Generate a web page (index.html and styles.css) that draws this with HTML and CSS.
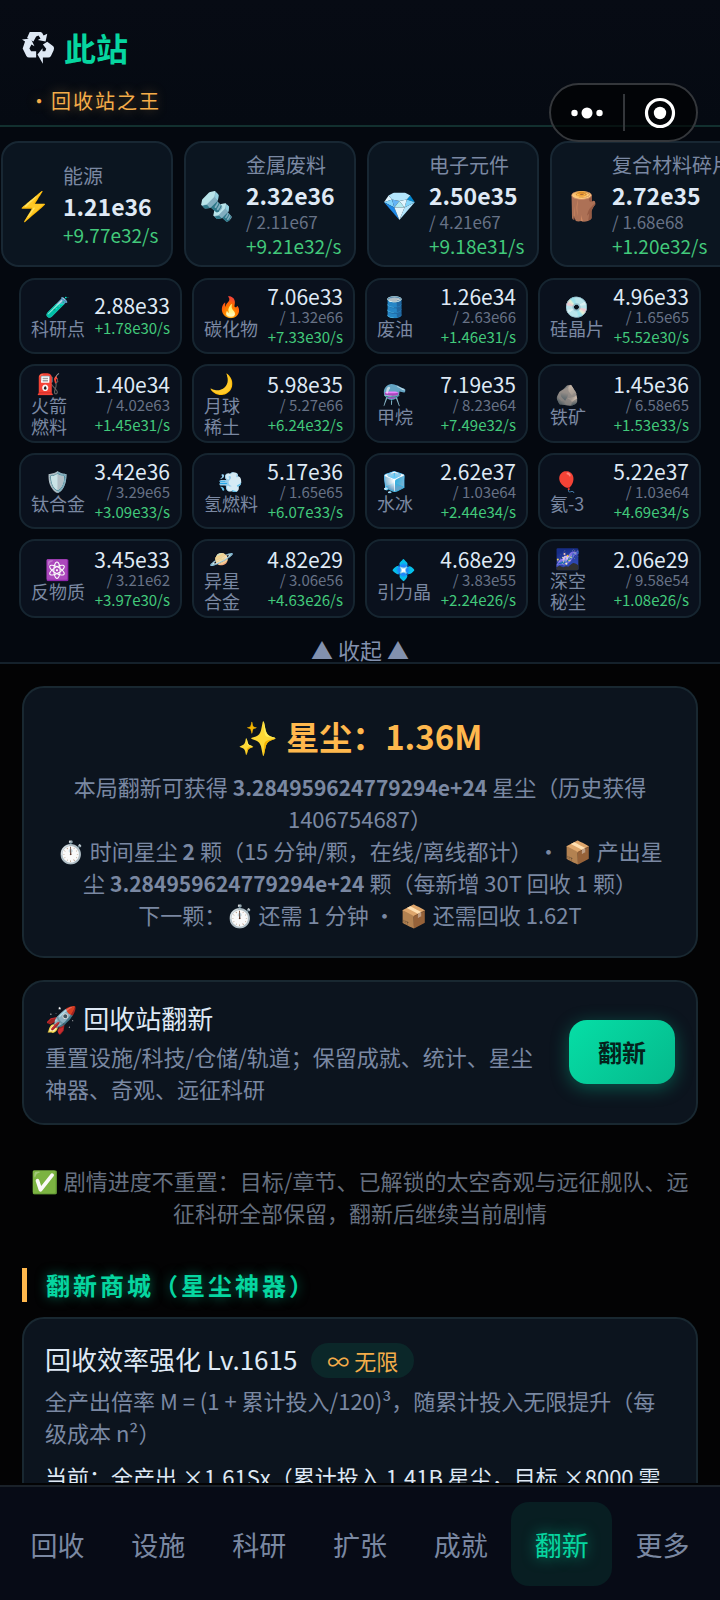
FILE: index.html
```html
<!DOCTYPE html>
<html lang="zh-CN">
<head>
    <meta charset="UTF-8">
    <meta name="viewport" content="width=device-width, initial-scale=1.0">
    <title>此站</title>
    <link rel="stylesheet" href="styles.css">
</head>
<body>
<div class="app">

    <header class="header">
        <h1 class="brand">
            <svg class="brand-icon" viewBox="18 16 98 98" fill="#dfe9f5" aria-hidden="true">
                <path d="M41 19H73Q78 19 82 29L93 24L88 47L65 43L73 38L67 29L60 32L52 47L33 37Z"/>
                <path d="M18 41L44 38L55 61L46 56L40 68L45 76H60V95H39Q34 95 31 90L20 68L27 47Z"/>
                <path d="M93 48L111 61Q115 66 112 73L104 90Q101 95 96 95H80V113L64 86L79 67V76H87L90 69L80 56Z"/>
            </svg>
            <span>此站</span>
        </h1>
        <div class="rank">・回收站之王</div>
        <div class="capsule">
            <button class="capsule-btn" aria-label="更多操作">
                <svg width="32" height="12" viewBox="0 0 32 12" fill="#fff"><circle cx="3.5" cy="6" r="3.2"/><circle cx="16" cy="6" r="5.5"/><circle cx="28.5" cy="6" r="3.2"/></svg>
            </button>
            <button class="capsule-btn" aria-label="关闭">
                <svg width="32" height="32" viewBox="0 0 32 32"><circle cx="16" cy="16" r="13.5" fill="none" stroke="#fff" stroke-width="3.2"/><circle cx="16" cy="16" r="6.2" fill="#fff"/></svg>
            </button>
        </div>
    </header>

    <section class="resources">
        <div class="chips">
            <div class="chip"><span class="chip-icon">⚡</span><div class="chip-info"><span class="chip-name">能源</span><b class="chip-value">1.21e36</b><span class="chip-rate">+9.77e32/s</span></div></div>
            <div class="chip"><span class="chip-icon">🔩</span><div class="chip-info"><span class="chip-name">金属废料</span><b class="chip-value">2.32e36</b><span class="chip-cap">/ 2.11e67</span><span class="chip-rate">+9.21e32/s</span></div></div>
            <div class="chip"><span class="chip-icon">💎</span><div class="chip-info"><span class="chip-name">电子元件</span><b class="chip-value">2.50e35</b><span class="chip-cap">/ 4.21e67</span><span class="chip-rate">+9.18e31/s</span></div></div>
            <div class="chip"><span class="chip-icon">🪵</span><div class="chip-info"><span class="chip-name">复合材料碎片</span><b class="chip-value">2.72e35</b><span class="chip-cap">/ 1.68e68</span><span class="chip-rate">+1.20e32/s</span></div></div>
        </div>

        <div class="grid">
            <div class="cell"><div class="cell-label"><span class="cell-icon">🧪</span><span>科研点</span></div><div class="cell-data"><span class="value">2.88e33</span><span class="rate">+1.78e30/s</span></div></div>
            <div class="cell"><div class="cell-label"><span class="cell-icon">🔥</span><span>碳化物</span></div><div class="cell-data"><span class="value">7.06e33</span><span class="cap">/ 1.32e66</span><span class="rate">+7.33e30/s</span></div></div>
            <div class="cell"><div class="cell-label"><span class="cell-icon">🛢️</span><span>废油</span></div><div class="cell-data"><span class="value">1.26e34</span><span class="cap">/ 2.63e66</span><span class="rate">+1.46e31/s</span></div></div>
            <div class="cell"><div class="cell-label"><span class="cell-icon">💿</span><span>硅晶片</span></div><div class="cell-data"><span class="value">4.96e33</span><span class="cap">/ 1.65e65</span><span class="rate">+5.52e30/s</span></div></div>

            <div class="cell"><div class="cell-label"><span class="cell-icon">⛽</span><span>火箭<br>燃料</span></div><div class="cell-data"><span class="value">1.40e34</span><span class="cap">/ 4.02e63</span><span class="rate">+1.45e31/s</span></div></div>
            <div class="cell"><div class="cell-label"><span class="cell-icon">🌙</span><span>月球<br>稀土</span></div><div class="cell-data"><span class="value">5.98e35</span><span class="cap">/ 5.27e66</span><span class="rate">+6.24e32/s</span></div></div>
            <div class="cell"><div class="cell-label"><span class="cell-icon">⚗️</span><span>甲烷</span></div><div class="cell-data"><span class="value">7.19e35</span><span class="cap">/ 8.23e64</span><span class="rate">+7.49e32/s</span></div></div>
            <div class="cell"><div class="cell-label"><span class="cell-icon">🪨</span><span>铁矿</span></div><div class="cell-data"><span class="value">1.45e36</span><span class="cap">/ 6.58e65</span><span class="rate">+1.53e33/s</span></div></div>

            <div class="cell"><div class="cell-label"><span class="cell-icon">🛡️</span><span>钛合金</span></div><div class="cell-data"><span class="value">3.42e36</span><span class="cap">/ 3.29e65</span><span class="rate">+3.09e33/s</span></div></div>
            <div class="cell"><div class="cell-label"><span class="cell-icon">💨</span><span>氢燃料</span></div><div class="cell-data"><span class="value">5.17e36</span><span class="cap">/ 1.65e65</span><span class="rate">+6.07e33/s</span></div></div>
            <div class="cell"><div class="cell-label"><span class="cell-icon">🧊</span><span>水冰</span></div><div class="cell-data"><span class="value">2.62e37</span><span class="cap">/ 1.03e64</span><span class="rate">+2.44e34/s</span></div></div>
            <div class="cell"><div class="cell-label"><span class="cell-icon">🎈</span><span>氦-3</span></div><div class="cell-data"><span class="value">5.22e37</span><span class="cap">/ 1.03e64</span><span class="rate">+4.69e34/s</span></div></div>

            <div class="cell"><div class="cell-label"><span class="cell-icon">⚛️</span><span>反物质</span></div><div class="cell-data"><span class="value">3.45e33</span><span class="cap">/ 3.21e62</span><span class="rate">+3.97e30/s</span></div></div>
            <div class="cell"><div class="cell-label"><span class="cell-icon">🪐</span><span>异星<br>合金</span></div><div class="cell-data"><span class="value">4.82e29</span><span class="cap">/ 3.06e56</span><span class="rate">+4.63e26/s</span></div></div>
            <div class="cell"><div class="cell-label"><span class="cell-icon">💠</span><span>引力晶</span></div><div class="cell-data"><span class="value">4.68e29</span><span class="cap">/ 3.83e55</span><span class="rate">+2.24e26/s</span></div></div>
            <div class="cell"><div class="cell-label"><span class="cell-icon">🌌</span><span>深空<br>秘尘</span></div><div class="cell-data"><span class="value">2.06e29</span><span class="cap">/ 9.58e54</span><span class="rate">+1.08e26/s</span></div></div>
        </div>

        <button class="toggle">▲ 收起 ▲</button>
    </section>

    <main class="content">
        <section class="card stardust">
            <h2 class="stardust-title">✨ 星尘：1.36M</h2>
            <p>本局翻新可获得 <b>3.284959624779294e+24</b> 星尘（历史获得 1406754687）</p>
            <p>⏱️ 时间星尘 <b>2</b> 颗（15 分钟/颗，在线/离线都计） ・ 📦 产出星尘 <b>3.284959624779294e+24</b> 颗（每新增 30T 回收 1 颗）</p>
            <p>下一颗：⏱️ 还需 1 分钟 ・ 📦 还需回收 1.62T</p>
        </section>

        <section class="card renew">
            <div class="renew-info">
                <h3 class="item-title">🚀 回收站翻新</h3>
                <p>重置设施/科技/仓储/轨道；保留成就、统计、星尘神器、奇观、远征科研</p>
            </div>
            <button class="renew-btn">翻新</button>
        </section>

        <p class="note">✅ 剧情进度不重置：目标/章节、已解锁的太空奇观与远征舰队、远征科研全部保留，翻新后继续当前剧情</p>

        <h2 class="section-title">翻新商城（星尘神器）</h2>

        <section class="card shop-item">
            <h3 class="item-title">回收效率强化 Lv.1615 <span class="badge">∞ 无限</span></h3>
            <p>全产出倍率 M = (1 + 累计投入/120)³，随累计投入无限提升（每级成本 n²）</p>
            <p class="current">当前：全产出 ×1.61Sx（累计投入 1.41B 星尘，目标 ×8000 需</p>
        </section>
    </main>

    <nav class="tabbar">
        <button class="tab">回收</button>
        <button class="tab">设施</button>
        <button class="tab">科研</button>
        <button class="tab">扩张</button>
        <button class="tab">成就</button>
        <button class="tab active">翻新</button>
        <button class="tab">更多</button>
    </nav>

</div>
</body>
</html>
```
FILE: styles.css
```css
* {
    box-sizing: border-box;
}

body {
    margin: 0;
    background-color: #030304;
    color: #dfe9f5;
    font-family: "Noto Sans CJK SC", "Noto Color Emoji", sans-serif;
    font-size: 22px;
    line-height: 32px;
}

h1, h2, h3, p {
    margin: 0;
}

button {
    padding: 0;
    border: none;
    background: none;
    color: inherit;
    font-family: inherit;
    cursor: pointer;
}

.app {
    display: flex;
    flex-direction: column;
    height: 100vh;
    overflow: hidden;
}

/* header */
.header {
    position: relative;
    flex: none;
    padding: 24px 22px 9px;
    background: linear-gradient(#070b14, #050a12);
    border-bottom: 2px solid #12302f;
}

.brand {
    display: flex;
    align-items: center;
    gap: 9px;
    font-size: 32px;
    line-height: 46px;
    color: #06d6a0;
}

.brand-icon {
    width: 33px;
    height: 33px;
}

.rank {
    margin-top: 16px;
    padding-left: 7px;
    font-size: 20px;
    line-height: 30px;
    letter-spacing: 2px;
    color: #f5ad49;
    text-shadow: 0 0 12px rgba(255, 184, 77, 0.4);
}

.capsule {
    position: absolute;
    right: 22px;
    top: 83px;
    z-index: 2;
    display: flex;
    width: 149px;
    height: 59px;
    padding: 9px 0;
    border: 2px solid #34373b;
    border-radius: 30px;
    background-color: rgba(0, 0, 0, 0.6);
}

.capsule-btn {
    flex: 1;
    display: flex;
    align-items: center;
    justify-content: center;
}

.capsule-btn + .capsule-btn {
    border-left: 2px solid #34373b;
}

/* resources */
.resources {
    flex: none;
    padding-top: 14px;
    background-color: #04080f;
    border-bottom: 2px solid #15212b;
}

.chips {
    display: flex;
    gap: 11px;
    padding-left: 1px;
    overflow: hidden;
}

.chip {
    flex: none;
    display: flex;
    align-items: center;
    gap: 9px;
    min-width: 172px;
    height: 126px;
    padding: 0 11px;
    border: 2px solid #182733;
    border-radius: 18px;
    background-color: #0b1520;
}

.chip-icon {
    width: 40px;
    font-size: 28px;
    text-align: center;
}

.chip-info {
    display: flex;
    flex-direction: column;
    white-space: nowrap;
}

.chip-name {
    font-size: 20px;
    line-height: 29px;
    color: #7a88a2;
}

.chip-value {
    font-size: 23px;
    font-weight: bold;
    line-height: 32px;
}

.chip-cap {
    font-size: 17px;
    line-height: 22px;
    color: #677286;
}

.chip-rate {
    font-size: 19px;
    line-height: 26px;
    color: #42c97b;
}

.grid {
    display: grid;
    grid-template-columns: repeat(4, 1fr);
    gap: 10px;
    padding: 11px 19px 0;
}

.cell {
    display: flex;
    align-items: center;
    justify-content: space-between;
    min-height: 76px;
    padding: 4px 10px;
    border: 2px solid #162530;
    border-radius: 16px;
    background-color: #0a111d;
    white-space: nowrap;
}

.cell-label {
    display: flex;
    flex-direction: column;
    align-items: center;
    font-size: 18px;
    line-height: 21px;
    color: #7a88a2;
}

.cell-icon {
    font-size: 20px;
    line-height: 25px;
}

.cell-data {
    display: flex;
    flex-direction: column;
    text-align: right;
}

.value {
    font-size: 21px;
    line-height: 24px;
}

.cap {
    font-size: 15px;
    line-height: 18px;
    color: #677286;
}

.rate {
    font-size: 15px;
    line-height: 22px;
    color: #42c97b;
}

.toggle {
    display: block;
    width: 100%;
    margin-top: 18px;
    font-size: 22px;
    line-height: 26px;
    color: #8291ae;
}

/* page content */
.content {
    flex: 1;
    min-height: 0;
    padding: 22px 22px 0;
    overflow: hidden;
    color: #7a88a2;
}

.card {
    padding: 22px 21px;
    border: 2px solid #192831;
    border-radius: 22px;
    background-color: #0c141e;
}

.stardust {
    padding: 24px 28px 26px;
    text-align: center;
}

.stardust b {
    font-size: 21px;
    line-height: 21px;
}

.stardust-title {
    margin-bottom: 10px;
    font-size: 33px;
    line-height: 48px;
    color: #ffb84d;
}

.renew {
    display: flex;
    align-items: center;
    gap: 22px;
    margin-top: 22px;
    padding: 17px 21px 19px;
}

.renew-info {
    flex: 1;
}

.item-title {
    margin-bottom: 3px;
    font-size: 26px;
    font-weight: normal;
    line-height: 38px;
    color: #dfe9f5;
}

.renew-btn {
    width: 106px;
    height: 64px;
    border-radius: 18px;
    background: linear-gradient(135deg, #06dea6, #05b98c);
    box-shadow: 0 4px 18px rgba(6, 214, 160, 0.35);
    font-size: 24px;
    font-weight: bold;
    color: #04231c;
}

.note {
    margin: 39px 0 40px;
    text-align: center;
    color: #667080;
}

.section-title {
    padding-left: 19px;
    border-left: 5px solid #ffb84d;
    font-size: 24px;
    line-height: 34px;
    letter-spacing: 3px;
    color: #06d6a0;
    text-shadow: 0 0 12px rgba(6, 214, 160, 0.5);
}

.shop-item {
    margin-top: 15px;
    padding-top: 21px;
}

.shop-item .item-title {
    margin-bottom: 6px;
}

.badge {
    display: inline-block;
    margin-left: 8px;
    padding: 0 16px;
    border-radius: 18px;
    background-color: #0b2729;
    font-size: 22px;
    line-height: 35px;
    color: #f5ad49;
}

.current {
    margin-top: 12px;
    color: #dfe9f5;
    white-space: nowrap;
}

/* bottom tabs */
.tabbar {
    flex: none;
    display: flex;
    margin-top: 2px;
    padding: 15px 7px 14px;
    border-top: 2px solid #1a2129;
    background-color: #070b16;
}

.tab {
    flex: 1;
    height: 84px;
    border-radius: 18px;
    font-size: 27px;
    color: #7a88a2;
}

.tab.active {
    background-color: #081e22;
    color: #06d6a0;
    text-shadow: 0 0 14px rgba(6, 214, 160, 0.6);
}
```
